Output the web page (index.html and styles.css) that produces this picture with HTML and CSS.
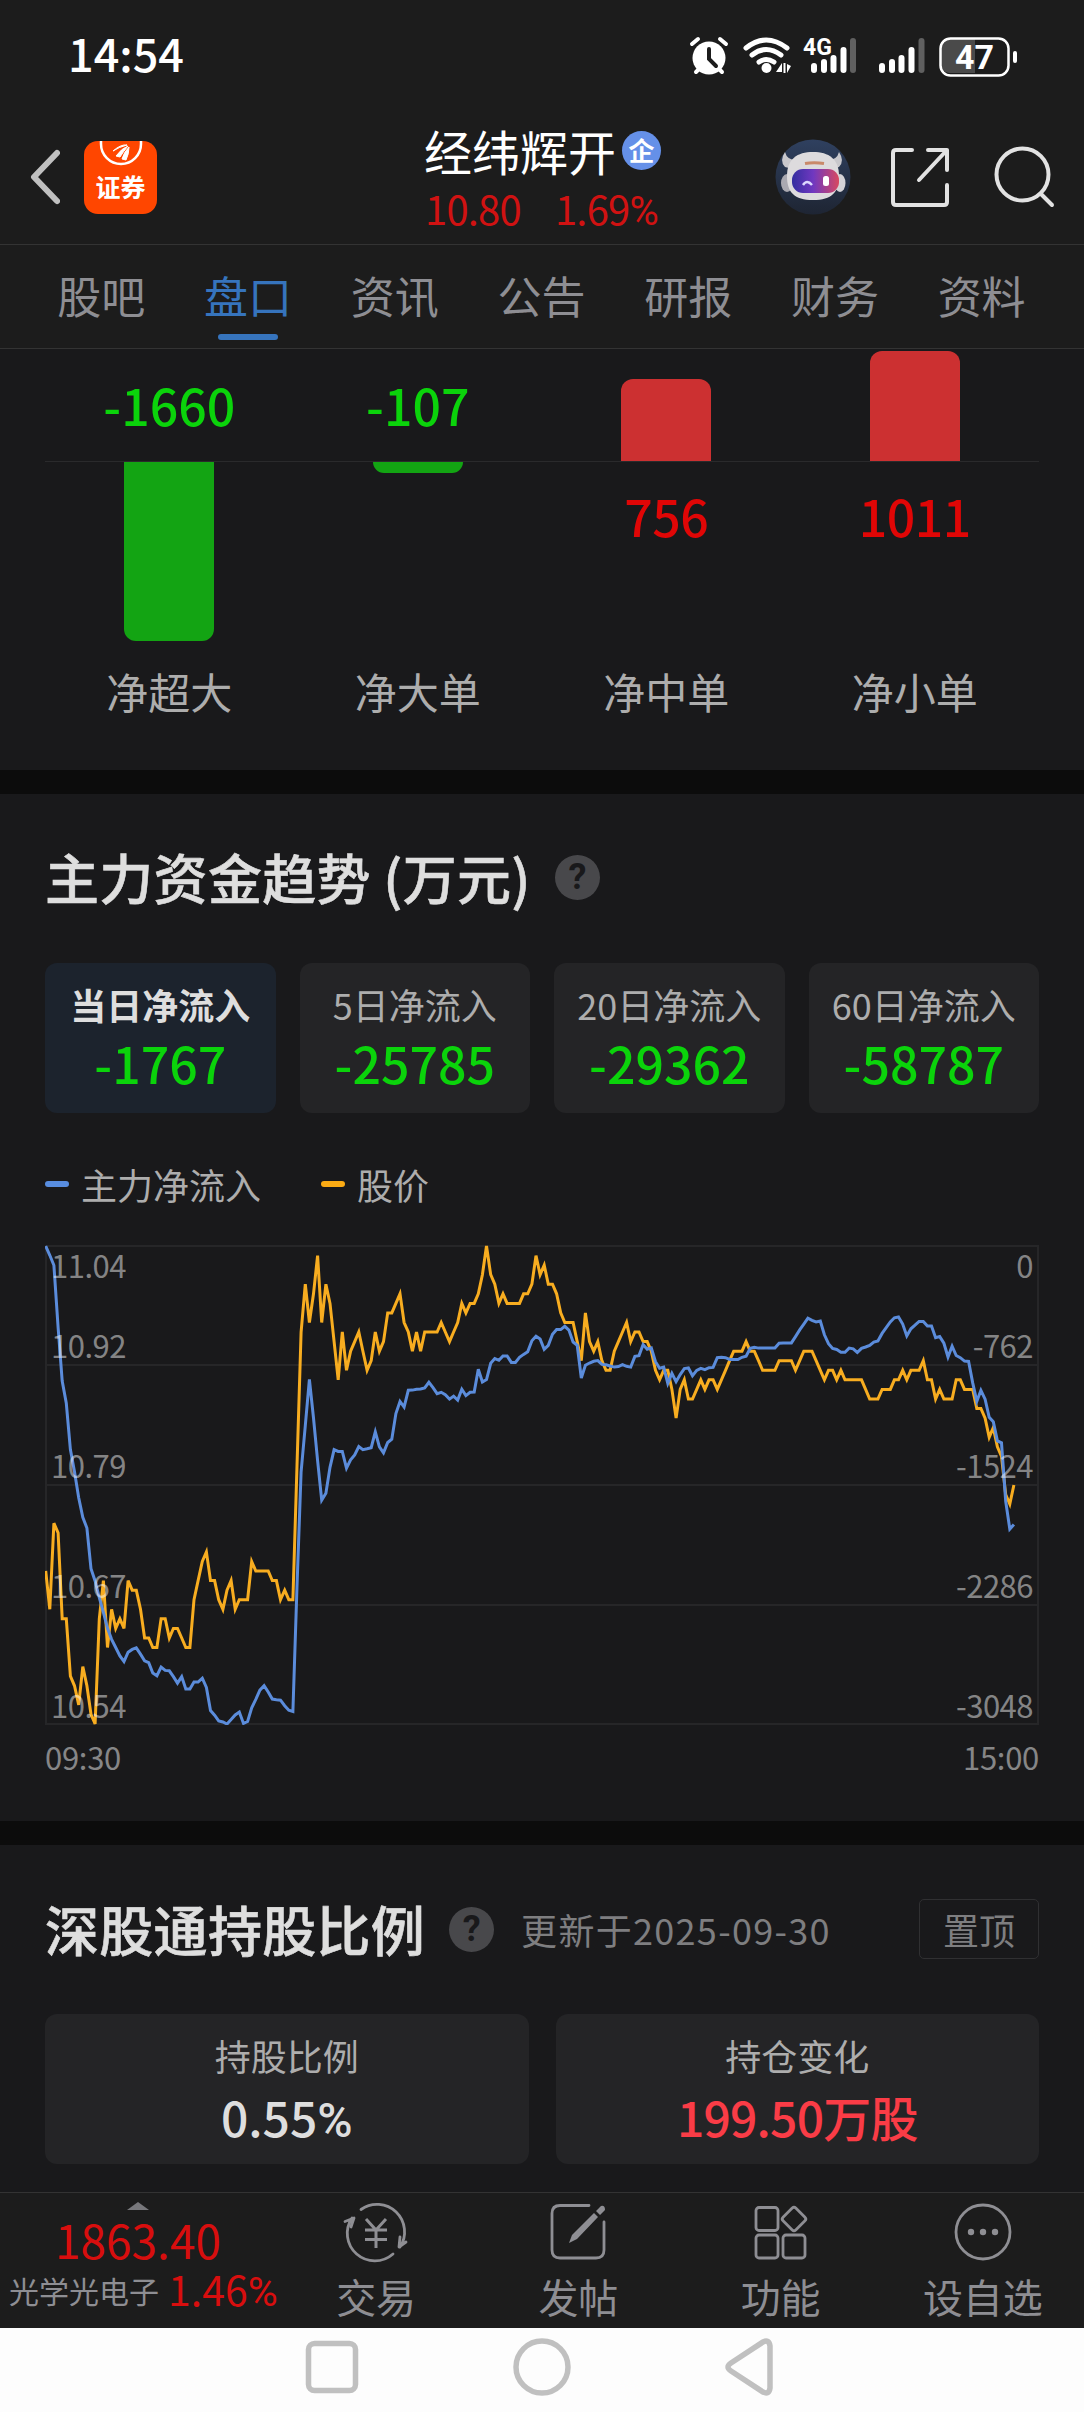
FILE: index.html
```html
<!DOCTYPE html>
<html lang="zh-CN">
<head>
  <meta charset="UTF-8">
  <meta name="viewport" content="width=device-width, initial-scale=1.0">
  <title>经纬辉开 - 盘口</title>
  <link rel="stylesheet" href="styles.css">
</head>
<body>
  <div class="status-bar">
    <span class="clock">14:54</span>
    <svg class="status-icons" width="336" height="50" viewBox="0 0 336 50">
      <!-- alarm -->
      <g stroke="#fff" stroke-linecap="round" fill="none">
        <circle cx="23" cy="27" r="16.5" fill="#fff" stroke="none"/>
        <path d="M6 13l6-5M40 13l-6-5" stroke-width="4"/>
        <path d="M10 41l3-3M36 41l-3-3" stroke-width="4"/>
        <path d="M23 18v10l7 7" stroke="#1c1c1c" stroke-width="4"/>
      </g>
      <!-- wifi -->
      <g stroke="#fff" stroke-width="5" stroke-linecap="round" fill="none">
        <path d="M60 17q20-16 41 0"/>
        <path d="M66 24q14-11 29 0"/>
        <path d="M73 31q7-5 15 0"/>
      </g>
      <circle cx="80.500" cy="37" r="5" fill="#fff"/>
      <path d="M96 32v9h-6zM97.500 32h2v10h-2zM101 33v9l4-7z" fill="#fff"/>
      <!-- mobile signal -->
      <text x="117" y="24" class="net">4G</text>
      <g stroke="#fff" stroke-width="6" stroke-linecap="round">
        <path d="M128 35v4M138 31v8M147.500 27v12M157.500 19v20"/>
        <path d="M167 10v29" stroke="#606060"/>
        <path d="M196 35v4M206 31v8M215.500 27v12M225.500 19v20"/>
        <path d="M235.500 10v29" stroke="#606060"/>
      </g>
      <!-- battery -->
      <path d="M263 8h26v34h-26q-8-1-8-9v-16q0-8 8-9z" fill="#4a4a4a"/>
      <rect x="254.500" y="7.500" width="68" height="37" rx="10" fill="none" stroke="#fff" stroke-width="2.500"/>
      <path d="M329 22v8" stroke="#fff" stroke-width="4" stroke-linecap="round"/>
      <text x="288.500" y="38" class="battery">47</text>
    </svg>
  </div>

  <header class="header">
    <div class="header-left">
      <svg width="32" height="56" viewBox="0 0 32 56"><path d="M29 4L6 28l23 24" fill="none" stroke="#c0c0c0" stroke-width="6" stroke-linecap="round" stroke-linejoin="round"/></svg>
      <div class="app-icon">
        <svg width="44" height="27" viewBox="0 0 44 27">
          <path d="M2 0v3a20 20 0 0 0 40 0V0" fill="none" stroke="#fff" stroke-width="2.500"/>
          <path d="M14 10q8-7 14-6-8 2-14 6zM17 15q6-8 12-10-5 6-8 11zM23 18q2-7 7-12 0 7-3 13z" fill="#fff" stroke="#fff"/>
        </svg>
        <span>证券</span>
      </div>
    </div>
    <div class="stock">
      <div class="stock-name">经纬辉开<span class="badge">企</span></div>
      <div class="stock-price"><span>10.80</span><span>1.69<i>%</i></span></div>
    </div>
    <div class="header-right">
      <svg class="robot" width="76" height="76" viewBox="0 0 76 76">
        <defs>
          <linearGradient id="visor" x1="0" x2="1"><stop offset="0" stop-color="#342ea0"/><stop offset=".45" stop-color="#7038c0"/><stop offset="1" stop-color="#d84860"/></linearGradient>
          <linearGradient id="night" x1="0" x2="0" y1="0" y2="1"><stop offset="0" stop-color="#2f405f"/><stop offset="1" stop-color="#1e2533"/></linearGradient>
        </defs>
        <circle cx="38" cy="38" r="37.500" fill="url(#night)"/>
        <path d="M10 13q-6 9 0 15l8 2 3-9q-9 0-11-8zM64 13q6 9 0 15l-8 2-3-9q9 0 11-8z" fill="#c9c8cc"/>
        <ellipse cx="12" cy="44" rx="6" ry="9" fill="#aaa9b1"/><ellipse cx="65" cy="44" rx="5.500" ry="9" fill="#d5d3d7"/>
        <path d="M38 13c16 0 26 7 26 24 0 16-7 24-26 24S12 53 12 37c0-17 10-24 26-24z" fill="#dddbdd"/>
        <path d="M30 24.500q9-1.500 19 0" stroke="#c9896a" stroke-width="3" fill="none"/>
        <rect x="17" y="30" width="47" height="24" rx="11" fill="url(#visor)"/>
        <path d="M28 46q4-6 9 0" fill="none" stroke="#dcd8ff" stroke-width="2.500"/>
        <rect x="48" y="37" width="6" height="10" rx="2.500" fill="#fff"/>
      </svg>
      <svg class="share" width="60" height="60" viewBox="0 0 60 60" fill="none" stroke="#e2e2e2" stroke-width="4" stroke-linecap="round" stroke-linejoin="round">
        <path d="M22 3H6q-3 0-3 3v49q0 3 3 3h48q3 0 3-3V38M38 3h19v20M57 3L29 33"/>
      </svg>
      <svg width="62" height="62" viewBox="0 0 62 62" fill="none" stroke="#e2e2e2" stroke-width="4" stroke-linecap="round">
        <circle cx="29.500" cy="28.500" r="26"/><path d="M48 48l11 11"/>
      </svg>
    </div>
  </header>

  <nav class="tabs">
    <a>股吧</a>
    <a class="active">盘口</a>
    <a>资讯</a>
    <a>公告</a>
    <a>研报</a>
    <a>财务</a>
    <a>资料</a>
  </nav>

  <section class="net-orders">
    <div class="half upper">
      <div class="cell"><b class="down">-1660</b></div>
      <div class="cell"><b class="down">-107</b></div>
      <div class="cell"><div class="bar bar-up" style="height: 82px"></div></div>
      <div class="cell"><div class="bar bar-up" style="height: 110px"></div></div>
    </div>
    <div class="half lower">
      <div class="cell"><div class="bar bar-down" style="height: 179px"></div></div>
      <div class="cell"><div class="bar bar-down" style="height: 11px"></div></div>
      <div class="cell"><b class="up">756</b></div>
      <div class="cell"><b class="up">1011</b></div>
    </div>
    <div class="names">
      <span>净超大</span><span>净大单</span><span>净中单</span><span>净小单</span>
    </div>
  </section>

  <section class="trend">
    <div class="title-row">
      <h2>主力资金趋势 (万元)</h2>
      <span class="help">?</span>
    </div>
    <div class="cards four">
      <div class="card selected"><span>当日净流入</span><b class="down">-1767</b></div>
      <div class="card"><span>5日净流入</span><b class="down">-25785</b></div>
      <div class="card"><span>20日净流入</span><b class="down">-29362</b></div>
      <div class="card"><span>60日净流入</span><b class="down">-58787</b></div>
    </div>
    <div class="legend">
      <span class="blue">主力净流入</span>
      <span class="orange">股价</span>
    </div>
    <div class="chart">
      <svg width="994" height="480" viewBox="0 0 994 480" fill="none">
        <path class="grid" d="M1 1H993V479H1ZM1 120H993M1 240H993M1 360H993"/>
        <polyline id="price-line" class="line price-line"/>
        <polyline id="flow-line" class="line flow-line"/>
      </svg>
      <div class="axis">
        <div><span>11.04</span><span>0</span></div>
        <div><span>10.92</span><span>-762</span></div>
        <div><span>10.79</span><span>-1524</span></div>
        <div><span>10.67</span><span>-2286</span></div>
        <div><span>10.54</span><span>-3048</span></div>
      </div>
    </div>
    <div class="times"><span>09:30</span><span>15:00</span></div>
  </section>

  <section class="holding">
    <div class="title-row">
      <h2>深股通持股比例</h2>
      <span class="help">?</span>
      <span class="updated">更新于2025-09-30</span>
      <button class="pin">置顶</button>
    </div>
    <div class="cards two">
      <div class="card"><span>持股比例</span><b>0.55<i>%</i></b></div>
      <div class="card"><span>持仓变化</span><b class="gain">199.50万股</b></div>
    </div>
  </section>

  <footer class="toolbar">
    <div class="index">
      <svg width="22" height="8" viewBox="0 0 22 8"><path d="M11 0l11 8H0z" fill="#77777b"/></svg>
      <div class="index-value">1863.40</div>
      <div class="index-name"><span>光学光电子</span><b>1.46<i>%</i></b></div>
    </div>
    <a>
      <svg width="66" height="62" viewBox="0 0 66 62">
        <path d="M18 8.500A27.500 27.500 0 0 1 57 46M50 53A27.500 27.500 0 0 1 9 17M2 20.500l9-3.500-3 9M57 36l-1 10 7-5" stroke-width="2.800"/>
        <path d="M23 18l10 11 10-11M33 29v18M22 29h22M22 38.500h22" stroke-width="3" stroke-linecap="butt"/>
      </svg>
      交易
    </a>
    <a>
      <svg width="66" height="62" viewBox="0 0 66 62">
        <path d="M44 4.500H15q-8 0-8 8V49q0 8 8 8h36q8 0 8-8V21"/>
        <path d="M49 12l4 4-21 22-8 4 3-8zM51 10l5-5q4-1 4 4l-5 5z" fill="#8e8e93" stroke="none"/>
      </svg>
      发帖
    </a>
    <a>
      <svg width="66" height="62" viewBox="0 0 66 62">
        <rect x="8" y="6.500" width="22" height="23" rx="3"/>
        <rect x="8" y="34" width="22" height="23" rx="3"/>
        <rect x="35" y="34" width="22" height="23" rx="3"/>
        <rect x="37" y="9" width="18" height="18" rx="2.500" transform="rotate(45 46 18)"/>
      </svg>
      功能
    </a>
    <a>
      <svg width="66" height="62" viewBox="0 0 66 62">
        <circle cx="33" cy="31" r="27"/>
        <g fill="#8e8e93" stroke="none"><circle cx="21" cy="31" r="3.200"/><circle cx="33" cy="31" r="3.200"/><circle cx="45" cy="31" r="3.200"/></g>
      </svg>
      设自选
    </a>
  </footer>

  <div class="system-nav">
    <svg width="60" height="60" viewBox="0 0 60 60"><rect x="6.500" y="6.500" width="47" height="47" rx="6"/></svg>
    <svg width="60" height="60" viewBox="0 0 60 60"><circle cx="30" cy="30" r="26"/></svg>
    <svg width="60" height="60" viewBox="0 0 60 60"><path d="M41 5q6-3 7 4v42q-1 7-7 4L9 34q-6-4 0-8z"/></svg>
  </div>

  <script>
    // minute by minute: price in cents below 11.04, outflow in 万元
    const price = [
      34,38,29,30,39,39,45,46,48,44,46,49,50,39,35,42,38,40,39,40,
      35,36,36,38,41,41,42,42,39,39,41,40,40,41,42,42,37,35,33,32,
      35,35,37,38,36,35,38,37,37,37,33,34,34,34,34,35,35,37,36,37,
      37,23,9,4,8,5,1,8,4,6,10,14,9,13,11,10,9,11,13,12,
      9,11,10,7,7,6,5,8,9,11,9,11,9,9,9,9,8,9,10,9,
      8,6,7,6,6,5,3,0,3,4,6,5,6,6,6,6,5,5,4,1,
      3,2,4,4,5,7,8,8,8,10,12,7,10,11,10,12,13,13,11,10,
      9,8,10,9,9,10,10,11,13,14,13,13,15,18,15,14,16,16,15,14,
      15,14,14,15,14,13,12,11,11,11,10,11,11,12,13,13,13,13,12,12,
      12,12,13,12,11,11,11,12,13,14,13,13,14,13,14,14,14,14,14,15,
      16,16,16,15,15,15,14,14,13,14,13,13,13,12,14,14,16,15,16,16,
      16,14,14,15,15,15,17,17,18,20,19,21,22,26,27,25
    ];
    const flow = [
      0,59,123,519,861,1003,1298,1440,1605,1730,1798,2058,2136,2242,2336,2438,2508,2560,2614,2650,
      2590,2572,2562,2602,2645,2657,2723,2740,2685,2706,2709,2746,2787,2746,2824,2824,2780,2780,2756,2815,
      2962,2992,3028,3035,3048,3020,2990,2972,3044,3032,2945,2891,2832,2804,2844,2889,2893,2896,2931,2960,
      2968,2170,1440,1145,850,1097,1369,1621,1576,1411,1298,1310,1310,1416,1364,1333,1279,1298,1293,1286,
      1185,1281,1319,1253,1232,1069,991,1027,920,919,914,912,905,869,903,942,933,948,976,957,
      982,914,954,933,931,786,867,852,748,718,729,701,701,742,742,710,691,674,604,576,
      593,659,633,563,533,533,512,536,612,633,842,761,746,735,731,755,757,765,772,769,
      757,767,772,704,699,629,659,650,738,780,772,876,812,865,820,782,778,827,793,780,
      789,776,774,712,710,712,723,724,724,710,703,653,646,651,651,651,651,651,620,618,
      618,618,578,535,498,460,474,484,479,566,623,653,660,677,677,651,656,679,653,644,
      634,613,606,557,521,484,458,453,498,573,528,505,481,481,510,510,585,578,620,708,
      639,698,712,734,736,873,991,920,977,1092,1121,1243,1255,1628,1805,1776
    ];

    function drawLine(id, data, max) {
      const points = data.map((v, i) => `${(0.7 + i * 4.12).toFixed(1)},${(1 + v / max * 478).toFixed(1)}`);
      document.getElementById(id).setAttribute('points', points.join(' '));
    }

    drawLine('price-line', price, 50);
    drawLine('flow-line', flow, 3048);
  </script>
</body>
</html>
```
FILE: styles.css
```css
* {
  box-sizing: border-box;
}

body {
  margin: 0;
  width: 1084px;
  height: 2412px;
  overflow: hidden;
  background-color: #0c0c0c;
  color: #dedede;
  font-family: "Noto Sans CJK SC", sans-serif;
}

svg {
  display: block;
  flex: none;
}

i {
  font-family: Roboto, sans-serif;
  font-style: normal;
}

b {
  font-weight: 500;
}

.up {
  color: #e00606;
}

.down {
  color: #0bd30b;
}

.status-bar {
  display: flex;
  justify-content: space-between;
  height: 110px;
  padding: 31px 62px 0 68px;
  background-color: #1c1c1c;
}

.clock {
  height: 44px;
  line-height: 44px;
  font-size: 45px;
  font-weight: 500;
  color: #fff;
}

.net {
  font: 700 23px Roboto, sans-serif;
  fill: #fff;
}

.battery {
  font: 700 34px Roboto, sans-serif;
  fill: #fff;
  text-anchor: middle;
}

.header {
  display: grid;
  grid-template-columns: 1fr 300px 1fr;
  height: 135px;
  background-color: #1c1c1c;
  border-bottom: 1px solid #333;
}

.header-left {
  display: flex;
  align-items: center;
  gap: 24px;
  padding-left: 28px;
}

.app-icon {
  display: flex;
  flex-direction: column;
  align-items: center;
  width: 73px;
  height: 73px;
  border-radius: 14px;
  background-color: #ff4600;
  color: #fff;
}

.app-icon span {
  font-size: 25px;
  font-weight: 700;
  line-height: 36px;
}

.stock {
  padding-top: 14px;
}

.stock-name {
  display: flex;
  align-items: center;
  gap: 6px;
  height: 52px;
  margin-left: 32px;
  font-size: 48px;
  line-height: 52px;
  color: #fff;
  white-space: nowrap;
}

.badge {
  width: 39px;
  height: 39px;
  border-radius: 50%;
  background-color: #6590e8;
  font-size: 26px;
  font-weight: 700;
  line-height: 37px;
  text-align: center;
}

.stock-price {
  display: flex;
  gap: 34px;
  margin: 9px 0 0 33px;
  font-size: 40px;
  line-height: 46px;
  letter-spacing: -0.8px;
  color: #d01212;
}

.header-right {
  display: flex;
  align-items: center;
  justify-content: flex-end;
  padding-right: 29px;
}

.robot {
  margin-right: 39px;
}

.share {
  margin-right: 43px;
}

.tabs {
  display: grid;
  grid-template-columns: repeat(7, 1fr);
  height: 104px;
  padding: 0 29px 0 28px;
  background-color: #1c1c1c;
  border-bottom: 1px solid #333;
}

.tabs a {
  display: flex;
  flex-direction: column;
  align-items: center;
  font-size: 44px;
  line-height: 101px;
  color: #8e8e93;
}

.tabs .active {
  color: #3674bd;
}

.tabs .active::after {
  content: "";
  width: 60px;
  height: 6px;
  margin-top: -12px;
  border-radius: 3px;
  background-color: #3674bd;
}

.net-orders {
  height: 421px;
  padding: 0 45px;
  background-color: #19191b;
}

.half,
.names {
  display: grid;
  grid-template-columns: repeat(4, 1fr);
  justify-items: center;
}

.half {
  font-size: 50px;
  line-height: 50px;
}

.upper {
  height: 113px;
  border-bottom: 1px solid #2a2a2c;
}

.upper .cell {
  align-self: end;
}

.upper b {
  display: block;
  padding-bottom: 32px;
}

.lower {
  height: 179px;
}

.lower b {
  display: block;
  padding-top: 28px;
  letter-spacing: -0.5px;
}

.bar {
  width: 90px;
}

.bar-up {
  border-radius: 12px 12px 0 0;
  background-color: #cc3031;
}

.bar-down {
  border-radius: 0 0 12px 12px;
  background-color: #13a413;
}

.names {
  padding-top: 22px;
  font-size: 42px;
  line-height: 56px;
  color: #adadad;
}

.trend {
  height: 1027px;
  margin-top: 24px;
  padding: 51px 45px 0;
  background-color: #19191b;
}

.title-row {
  display: flex;
  align-items: center;
  height: 64px;
}

h2 {
  margin: 0;
  font-size: 54px;
  font-weight: 500;
  line-height: 64px;
  letter-spacing: 0.3px;
  color: #dedede;
  -webkit-text-stroke: 0.6px #dedede;
}

.help {
  width: 45px;
  height: 45px;
  margin-left: 24px;
  border-radius: 50%;
  background-color: #48484b;
  color: #19191b;
  font: 700 36px/45px Roboto, sans-serif;
  text-align: center;
}

.cards {
  display: grid;
}

.four {
  grid-template-columns: repeat(4, 1fr);
  gap: 24px;
  margin-top: 54px;
}

.two {
  grid-template-columns: repeat(2, 1fr);
  gap: 27px;
  margin-top: 53px;
}

.card {
  height: 150px;
  padding-top: 14px;
  border-radius: 12px;
  background-color: #242426;
  text-align: center;
  white-space: nowrap;
}

.card span {
  display: block;
  font-size: 36px;
  line-height: 54px;
  color: #adadad;
}

.card b {
  display: block;
  font-size: 50px;
  line-height: 62px;
}

.two b {
  font-size: 48px;
  line-height: 68px;
}

.two .gain {
  letter-spacing: -0.8px;
  color: #fa3c46;
}

.selected {
  background-color: #1c232d;
}

.selected span {
  font-weight: 700;
  color: #dedede;
}

.legend {
  display: flex;
  gap: 60px;
  margin-top: 45px;
  font-size: 36px;
  line-height: 52px;
  color: #adadad;
}

.legend span {
  display: flex;
  align-items: center;
  gap: 12px;
}

.legend span::before {
  content: "";
  width: 24px;
  height: 6px;
  border-radius: 3px;
  background-color: #588de0;
}

.legend .orange::before {
  background-color: #fbab14;
}

.chart {
  position: relative;
  height: 480px;
  margin-top: 35px;
}

.grid {
  stroke: #262628;
  stroke-width: 2;
}

.line {
  stroke-width: 3;
  stroke-linejoin: miter;
}

.price-line {
  stroke: #f8ad20;
}

.flow-line {
  stroke: #5b8cdb;
}

/* labels are drawn over the lines */
.axis {
  position: absolute;
  inset: 0 6px 0 6px;
  font-size: 31px;
  line-height: 40px;
  letter-spacing: -0.5px;
  color: rgba(255, 255, 255, 0.48);
}

.axis div {
  display: flex;
  justify-content: space-between;
  height: 120px;
}

.axis div:first-child {
  height: 80px;
}

.times {
  display: flex;
  justify-content: space-between;
  margin-top: 12px;
  font-size: 31px;
  line-height: 40px;
  letter-spacing: -0.3px;
  color: #868687;
}

.holding {
  height: 347px;
  margin-top: 24px;
  padding: 52px 45px 0;
  background-color: #19191b;
}

.updated {
  margin-left: 27px;
  font-size: 36px;
  letter-spacing: 1.3px;
  color: #7e7e80;
}

.pin {
  width: 120px;
  height: 60px;
  margin-left: auto;
  padding: 0;
  border: 1px solid #303032;
  border-radius: 5px;
  background: none;
  color: #7e7e80;
  font: 36px/56px "Noto Sans CJK SC", sans-serif;
}

.toolbar {
  display: grid;
  grid-template-columns: 275px repeat(4, 1fr);
  height: 136px;
  background-color: #1c1c1c;
  border-top: 1px solid #333;
}

.toolbar a {
  display: flex;
  flex-direction: column;
  align-items: center;
  padding-top: 8px;
  font-size: 40px;
  line-height: 66px;
  color: #8e8e93;
}

.toolbar a svg {
  fill: none;
  stroke: #8e8e93;
  stroke-width: 2.8;
  stroke-linecap: round;
  stroke-linejoin: round;
}

.index {
  padding: 9px 0 0 9px;
  white-space: nowrap;
}

.index svg {
  margin-left: 118px;
}

.index-value {
  margin-left: 46px;
  font-size: 46px;
  line-height: 58px;
  color: #d80e0e;
}

.index-name {
  display: flex;
  align-items: center;
  gap: 9px;
  height: 44px;
  font-size: 30px;
  line-height: 40px;
  color: #8e8e93;
}

.index-name b {
  font-size: 41px;
  font-weight: 400;
  line-height: 44px;
  color: #d80e0e;
}

.system-nav {
  display: flex;
  justify-content: center;
  gap: 150px;
  height: 84px;
  padding-top: 9px;
  background-color: #fdfdfd;
}

.system-nav svg {
  fill: none;
  stroke: #c0c0c0;
  stroke-width: 5.5;
}
```
